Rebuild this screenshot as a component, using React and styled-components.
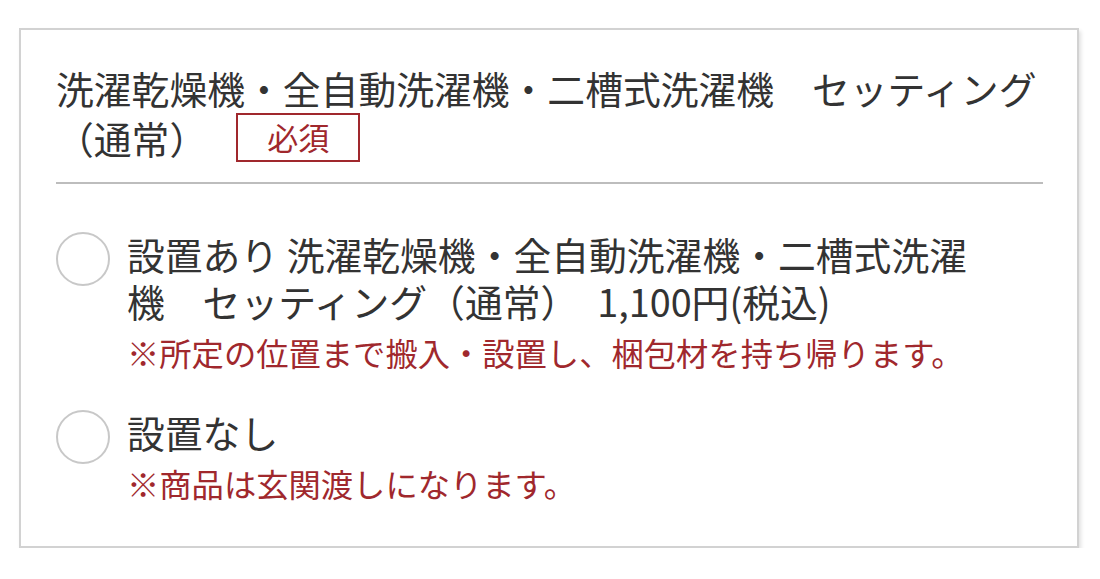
import React from 'react';
import styled, { createGlobalStyle } from 'styled-components';

const GlobalStyle = createGlobalStyle`
    body {
        margin: 0;
        background: #fff;
        font-family: "Noto Sans CJK JP", "Noto Sans", sans-serif;
        color: #333;
    }
`;

const options = [
    {
        id: 'with',
        label: '設置あり 洗濯乾燥機・全自動洗濯機・二槽式洗濯機　セッティング（通常）　1,100円(税込)',
        note: '※所定の位置まで搬入・設置し、梱包材を持ち帰ります。',
    },
    {
        id: 'without',
        label: '設置なし',
        note: '※商品は玄関渡しになります。',
    },
];

const SettingOption = () => {
    const [picked, setPicked] = React.useState(null);

    return (
        <>
            <GlobalStyle />
            <Card>
                <Title>
                    洗濯乾燥機・全自動洗濯機・二槽式洗濯機　セッティング（通常）
                    <Required>必須</Required>
                </Title>
                <Divider />
                <OptionList>
                    {options.map((o) => (
                        <Option key={o.id} onClick={() => setPicked(o.id)}>
                            <Radio $checked={picked === o.id} />
                            <OptionBody>
                                <OptionLabel>{o.label}</OptionLabel>
                                <Note>{o.note}</Note>
                            </OptionBody>
                        </Option>
                    ))}
                </OptionList>
            </Card>
        </>
    );
};

const Card = styled.section`
    box-sizing: border-box;
    width: 1060px;
    margin: 28px 0 0 19px;
    padding: 33px 34px 41px 35px;
    border: 2px solid #d2d2d2;
    box-shadow: 2px 3px 4px rgba(0, 0, 0, 0.12);
    background: #fff;
`;

const Title = styled.div`
    font-size: 37.8px;
    line-height: 50px;
    color: #333;
`;

const Required = styled.span`
    display: inline-block;
    box-sizing: border-box;
    height: 49px;
    margin-left: 29px;
    padding: 0 29px;
    border: 2px solid #a0282d;
    color: #a0282d;
    font-size: 31px;
    line-height: 44px;
    vertical-align: top;
`;

const Divider = styled.hr`
    margin: 19px 0 0;
    border: none;
    height: 2px;
    background: #bdbdbd;
`;

const OptionList = styled.div`
    display: flex;
    flex-direction: column;
    gap: 34px;
    margin-top: 46px;
`;

const Option = styled.label`
    display: flex;
    align-items: flex-start;
    gap: 17px;
    cursor: pointer;
`;

const Radio = styled.span`
    flex: none;
    box-sizing: border-box;
    width: 54px;
    height: 54px;
    margin-top: 2px;
    border-radius: 50%;
    border: 2px solid #c8c8c8;
    background: ${(p) => (p.$checked ? 'radial-gradient(circle, #a0282d 0 12px, #fff 13px)' : '#fff')};
`;

const OptionBody = styled.div`
    width: 864px;
`;

const OptionLabel = styled.div`
    font-size: 37.8px;
    line-height: 47px;
    color: #333;
`;

const Note = styled.div`
    margin-top: 6px;
    font-size: 32.3px;
    line-height: 44px;
    color: #a0282d;
`;

export default SettingOption;
